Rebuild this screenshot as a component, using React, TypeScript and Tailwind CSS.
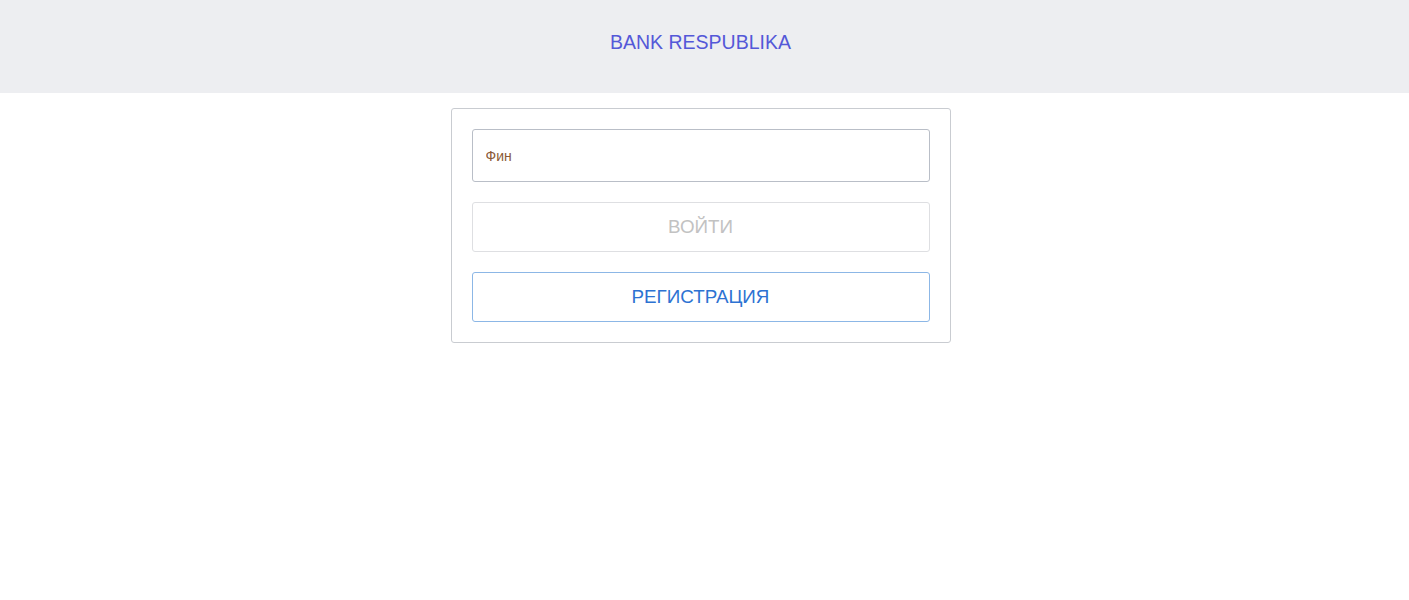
export default function App() {
  return (
    <div className="min-h-screen bg-white font-['Liberation_Sans',Arial,sans-serif]">
      <header className="h-[93px] bg-[#edeef1] pr-2 pt-[30px]">
        <h1 className="text-center text-[19.5px] leading-[24px] text-[#5458d8]">BANK RESPUBLIKA</h1>
      </header>
      <div className="flex justify-center pt-[15px] pr-2">
        <div className="w-[500px] border border-[#c9ccd1] rounded-[3px] p-5 flex flex-col gap-5">
          <input
            type="text"
            defaultValue="Фин"
            className="h-[53px] w-full border border-[#b9bec7] rounded-[3px] px-[13px] text-[14px] text-[#8b5a36] outline-none"
          />
          <button
            disabled
            className="h-[50px] w-full border border-[#dedfe2] rounded-[3px] text-[18.8px] text-[#c2c2c2] bg-white"
          >
            ВОЙТИ
          </button>
          <button className="h-[50px] w-full border border-[#8cb7e6] rounded-[3px] text-[18.8px] text-[#2d72d2] bg-white">
            РЕГИСТРАЦИЯ
          </button>
        </div>
      </div>
    </div>
  );
}
